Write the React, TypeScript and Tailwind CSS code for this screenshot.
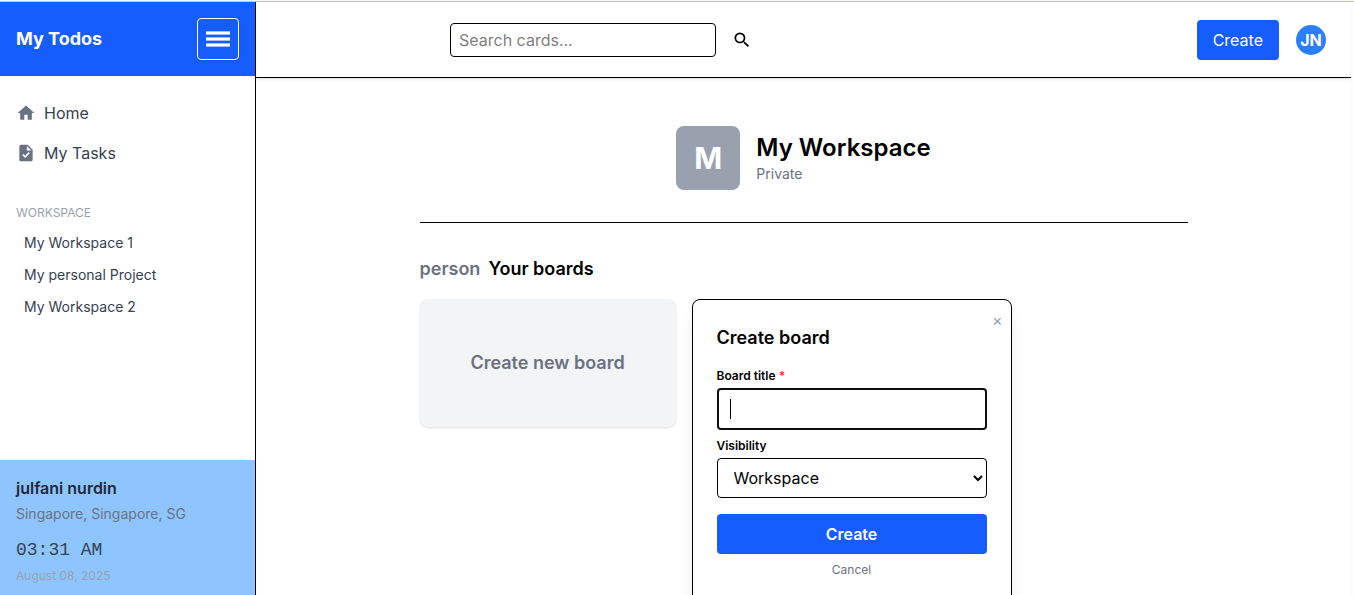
import React from "react";
import { MdHome, MdSearch, MdTask } from "react-icons/md";

const workspaces = ["My Workspace 1", "My personal Project", "My Workspace 2"];

function Sidebar() {
  return (
    <aside className="flex w-64 shrink-0 flex-col border-r border-black bg-white">
      <div className="flex h-[74px] shrink-0 items-center justify-between bg-[#155dfc] px-4 text-white">
        <span className="text-lg font-bold">My Todos</span>
        <button className="flex h-[42px] w-[42px] items-center justify-center rounded border border-white shadow-sm" aria-label="Menu">
          <svg width="24" height="16" viewBox="0 0 24 16" fill="currentColor">
            <rect y="0.4" width="24" height="3.2" />
            <rect y="6.4" width="24" height="3.2" />
            <rect y="12.4" width="24" height="3.2" />
          </svg>
        </button>
      </div>
      <nav className="flex flex-col px-4 pt-[17px] text-[#364153]">
        <a className="flex h-10 items-center gap-2">
          <MdHome size={20} className="text-[#6a7282]" />
          Home
        </a>
        <a className="flex h-10 items-center gap-2">
          <MdTask size={20} className="text-[#6a7282]" />
          My Tasks
        </a>
        <h3 className="mt-8 text-xs leading-4 text-[#99a1af]">WORKSPACE</h3>
        <ul className="mt-1.5 px-2 text-sm">
          {workspaces.map((w) => (
            <li key={w} className="flex h-8 items-center">{w}</li>
          ))}
        </ul>
      </nav>
      <div className="mt-auto h-[135px] bg-[#8ec5ff] px-4 pt-4">
        <p className="font-semibold leading-6 text-[#1e2939]">julfani nurdin</p>
        <p className="mt-1 text-sm leading-5 text-[#6a7282]">Singapore, Singapore, SG</p>
        <p className="mt-3 font-['Liberation_Mono',monospace] text-lg leading-7 text-[#364153]">03:31 AM</p>
        <p className="mt-1 text-xs leading-4 text-[#99a1af]">August 08, 2025</p>
      </div>
    </aside>
  );
}

function Header() {
  return (
    <header className="flex h-19 shrink-0 items-center border-b border-black bg-white pr-[25px] pl-[194px] shadow-sm">
      <div className="flex h-[34px] w-[266px] items-center rounded border border-black px-2">
        <input className="w-full outline-none placeholder:text-[#808080]" placeholder="Search cards..." />
      </div>
      <MdSearch size={20} className="ml-4 text-black" />
      <button className="ml-auto h-10 rounded bg-[#155dfc] px-4 text-white">Create</button>
      <div className="ml-[17px] flex h-[30px] w-[30px] items-center justify-center rounded-full bg-[#2b7fff] font-bold text-white">
        JN
      </div>
    </header>
  );
}

function CreateBoardPanel() {
  return (
    <div className="relative h-[330px] w-80 rounded-lg border border-black bg-white px-6 pt-6 shadow-lg">
      <button className="absolute top-2 right-2 text-base leading-6 text-[#99a1af]">×</button>
      <h3 className="text-lg leading-7 font-semibold">Create board</h3>
      <label className="mt-4 block text-xs leading-4 font-semibold">
        Board title <span className="text-[#fb2c36]">*</span>
      </label>
      <div className="mt-1 flex h-[42px] items-center rounded border-2 border-[#101010] px-[11px]">
        <span className="h-5 w-px bg-black" />
      </div>
      <label className="mt-2 block text-xs leading-4 font-semibold">Visibility</label>
      <select className="mt-1 block h-10 w-full rounded border border-black bg-white px-3">
        <option>Workspace</option>
        <option>Private</option>
      </select>
      <button className="mt-4 h-10 w-full rounded bg-[#155dfc] font-semibold text-white">Create</button>
      <button className="mt-2 block w-full text-center text-xs leading-4 text-[#6a7282]">Cancel</button>
    </div>
  );
}

export default function App() {
  return (
    <div className="flex h-[595px] flex-col overflow-hidden bg-white font-['Inter',sans-serif] text-base text-black">
      <div className="h-0.5 shrink-0 border-b border-[#c8c4c0] bg-[#f6f5f4]" />
      <div className="flex min-h-0 flex-1">
        <Sidebar />
        <div className="flex min-w-0 flex-1 flex-col">
          <Header />
          <main className="mx-auto w-[768px] pt-12">
            <section className="flex items-center justify-center gap-4 border-b border-black pb-8">
              <div className="flex h-16 w-16 items-center justify-center rounded-lg bg-[#99a1af] text-3xl font-bold text-white">M</div>
              <div>
                <h1 className="text-2xl leading-8 font-semibold">My Workspace</h1>
                <p className="text-sm leading-5 text-[#6a7282]">Private</p>
              </div>
            </section>
            <h2 className="mt-8 flex gap-2 text-lg leading-7 font-semibold">
              <span className="text-[#6a7282]">person</span>
              Your boards
            </h2>
            <div className="mt-4 flex items-start gap-4">
              <button className="h-32 w-64 rounded-lg bg-[#f3f4f6] text-lg font-semibold text-[#6a7282] shadow-sm">
                Create new board
              </button>
              <CreateBoardPanel />
            </div>
          </main>
        </div>
        <div className="w-[3px] shrink-0 bg-[#fcfcfc]" />
      </div>
    </div>
  );
}
